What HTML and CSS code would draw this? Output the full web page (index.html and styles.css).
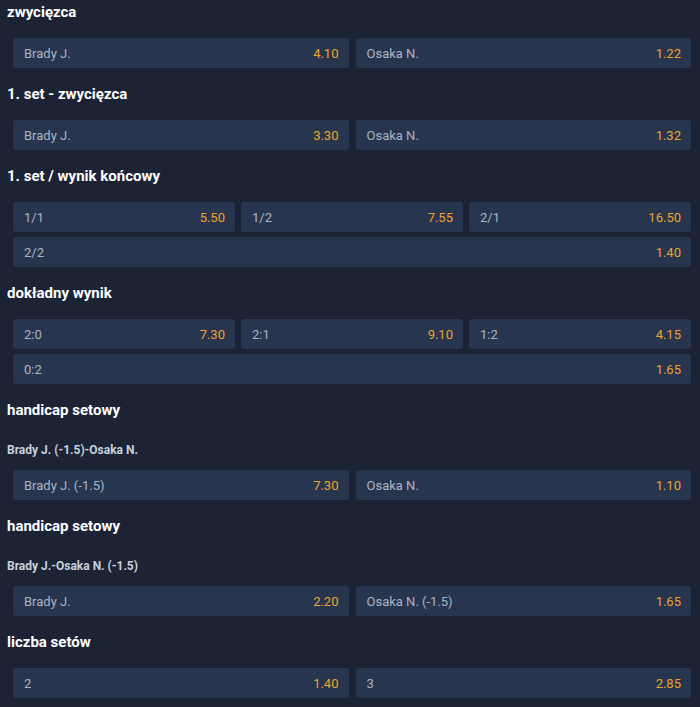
FILE: index.html
```html
<!DOCTYPE html>
<html lang="pl">
<head>
<meta charset="utf-8">
<title>Zakłady</title>
<link rel="stylesheet" href="styles.css">
</head>
<body>
<div class="markets">
  <section class="market">
    <h2 class="title">zwycięzca</h2>
    <div class="grid cols-2">
      <div class="odd"><span class="name">Brady J.</span><span class="val">4.10</span></div>
      <div class="odd"><span class="name">Osaka N.</span><span class="val">1.22</span></div>
    </div>
  </section>
  <section class="market">
    <h2 class="title">1. set - zwycięzca</h2>
    <div class="grid cols-2">
      <div class="odd"><span class="name">Brady J.</span><span class="val">3.30</span></div>
      <div class="odd"><span class="name">Osaka N.</span><span class="val">1.32</span></div>
    </div>
  </section>
  <section class="market">
    <h2 class="title">1. set / wynik końcowy</h2>
    <div class="grid cols-3">
      <div class="odd"><span class="name">1/1</span><span class="val">5.50</span></div>
      <div class="odd"><span class="name">1/2</span><span class="val">7.55</span></div>
      <div class="odd"><span class="name">2/1</span><span class="val">16.50</span></div>
      <div class="odd full"><span class="name">2/2</span><span class="val">1.40</span></div>
    </div>
  </section>
  <section class="market">
    <h2 class="title">dokładny wynik</h2>
    <div class="grid cols-3">
      <div class="odd"><span class="name">2:0</span><span class="val">7.30</span></div>
      <div class="odd"><span class="name">2:1</span><span class="val">9.10</span></div>
      <div class="odd"><span class="name">1:2</span><span class="val">4.15</span></div>
      <div class="odd full"><span class="name">0:2</span><span class="val">1.65</span></div>
    </div>
  </section>
  <section class="market">
    <h2 class="title">handicap setowy</h2>
    <h3 class="subtitle">Brady J. (-1.5)-Osaka N.</h3>
    <div class="grid cols-2">
      <div class="odd"><span class="name">Brady J. (-1.5)</span><span class="val">7.30</span></div>
      <div class="odd"><span class="name">Osaka N.</span><span class="val">1.10</span></div>
    </div>
  </section>
  <section class="market">
    <h2 class="title">handicap setowy</h2>
    <h3 class="subtitle">Brady J.-Osaka N. (-1.5)</h3>
    <div class="grid cols-2">
      <div class="odd"><span class="name">Brady J.</span><span class="val">2.20</span></div>
      <div class="odd"><span class="name">Osaka N. (-1.5)</span><span class="val">1.65</span></div>
    </div>
  </section>
  <section class="market">
    <h2 class="title">liczba setów</h2>
    <div class="grid cols-2">
      <div class="odd"><span class="name">2</span><span class="val">1.40</span></div>
      <div class="odd"><span class="name">3</span><span class="val">2.85</span></div>
    </div>
  </section>
</div>
</body>
</html>
```

FILE: styles.css
```css
html, body {
  margin: 0;
  padding: 0;
  background: #1b2335;
}
body {
  font-family: Roboto, "Liberation Sans", Arial, sans-serif;
  color: #ffffff;
}
.markets {
  padding: 2px 9px 0 0;
  display: flex;
  flex-direction: column;
  gap: 16px;
}
.market {
  display: flex;
  flex-direction: column;
}
.title {
  margin: 0 0 16px 7px;
  font-size: 15px;
  font-weight: 700;
  line-height: 20px;
  color: #ffffff;
}
.subtitle {
  margin: 6px 0 12px 7px;
  font-size: 12px;
  font-weight: 700;
  line-height: 16px;
  color: #c9d1de;
}
.grid {
  display: grid;
  gap: 5px 6px;
  margin-left: 13px;
}
.cols-2 { grid-template-columns: 1fr 1fr; column-gap: 7px; }
.cols-3 { grid-template-columns: 1fr 1fr 1fr; }
.full { grid-column: 1 / -1; }
.odd {
  height: 30px;
  display: flex;
  align-items: center;
  justify-content: space-between;
  padding: 0 10px 0 11px;
  background: #27364e;
  border-radius: 3px;
  font-size: 13px;
}
.name { color: #aab4c4; }
.val { color: #eda42c; }
```
